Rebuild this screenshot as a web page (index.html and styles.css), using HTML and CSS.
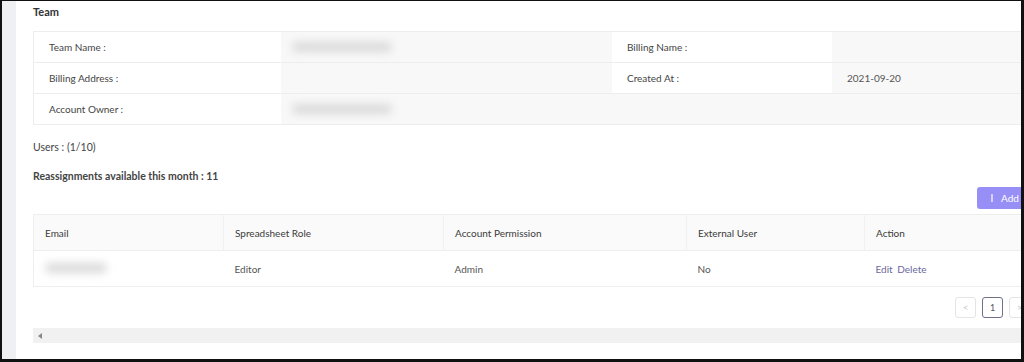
FILE: index.html
```html
<!DOCTYPE html>
<html>
<head>
  <title>Team</title>
  <link rel="stylesheet" href="styles.css">
</head>
<body>
  <div class="frame">
    <aside class="rail"></aside>
    <main class="page">
      <h2 class="title">Team</h2>

      <div class="desc">
        <div class="desc-label">Team Name :</div>
        <div class="desc-value"><span class="redacted"></span></div>
        <div class="desc-label">Billing Name :</div>
        <div class="desc-value"></div>

        <div class="desc-label">Billing Address :</div>
        <div class="desc-value"></div>
        <div class="desc-label">Created At :</div>
        <div class="desc-value">2021-09-20</div>

        <div class="desc-label">Account Owner :</div>
        <div class="desc-value desc-wide"><span class="redacted"></span></div>
      </div>

      <p class="stat">Users : (1/10)</p>
      <p class="stat stat-strong">Reassignments available this month : 11</p>

      <div class="toolbar">
        <button class="btn-add">
          <svg width="6" height="10" viewBox="0 0 6 10"><path d="M3 1v8" stroke="#fff" stroke-width="1.2"/></svg>
          Add
        </button>
      </div>

      <table class="users">
        <thead>
          <tr>
            <th class="col-email">Email</th>
            <th class="col-role">Spreadsheet Role</th>
            <th class="col-perm">Account Permission</th>
            <th class="col-ext">External User</th>
            <th>Action</th>
          </tr>
        </thead>
        <tbody>
          <tr>
            <td><span class="redacted redacted-sm"></span></td>
            <td>Editor</td>
            <td>Admin</td>
            <td>No</td>
            <td><a class="link">Edit</a> <a class="link">Delete</a></td>
          </tr>
        </tbody>
      </table>

      <div class="pager">
        <span class="page-btn page-off">&lt;</span>
        <span class="page-btn page-on">1</span>
        <span class="page-btn page-off">&gt;</span>
      </div>

      <div class="hscroll">
        <svg width="4" height="6" viewBox="0 0 4 6"><path d="M4 0L0 3l4 3z" fill="#888"/></svg>
      </div>
    </main>
  </div>
</body>
</html>
```

FILE: styles.css
```css
body {
  margin: 0;
  font-family: Lato, "Liberation Sans", sans-serif;
  color: #3a3a3a;
}

.frame {
  width: 1024px;
  height: 362px;
  box-sizing: border-box;
  border: 2px solid #111;
  border-top-width: 1px;
  border-right-width: 3px;
  border-bottom-width: 3px;
  display: flex;
  overflow: hidden;
  background-color: #fff;
}

.rail {
  flex: none;
  width: 14px;
  background-color: #eef0f4;
}

.page {
  flex: none;
  width: 1007px;
  padding: 3px 16px 0 17px;
}

.title {
  margin: 0 0 11px;
  font-size: 11px;
  line-height: 16px;
  font-weight: bold;
  color: #333;
}

.desc {
  display: grid;
  grid-template-columns: 247px 331px 220px 1fr;
  border: 1px solid #ededed;
  border-bottom: none;
  font-size: 10px;
}

.desc-label,
.desc-value {
  height: 30px;
  display: flex;
  align-items: center;
  border-bottom: 1px solid #ededed;
}

.desc-label {
  padding-left: 15px;
  background-color: #fff;
  color: #444;
}

.desc-value {
  padding-left: 15px;
  background-color: #f8f8f8;
  color: #555;
}

.desc-wide {
  grid-column: span 3;
}

.redacted {
  display: inline-block;
  width: 100px;
  height: 10px;
  margin-left: -4px;
  border-radius: 6px;
  background-color: #dadada;
  filter: blur(4px);
}

.redacted-sm {
  width: 62px;
  margin-left: 0;
}

.stat {
  margin: 14px 0 0;
  font-size: 10.5px;
  line-height: 16px;
  color: #444;
}

.stat-strong {
  margin-top: 13px;
  font-weight: bold;
}

.toolbar {
  display: flex;
  justify-content: flex-end;
  margin-top: 3px;
}

.btn-add {
  width: 63px;
  height: 22px;
  padding: 0 0 0 12px;
  display: flex;
  align-items: center;
  gap: 6px;
  border: none;
  border-radius: 3px;
  background-color: #978ff5;
  color: #fff;
  font-family: inherit;
  font-size: 10px;
}

.users {
  width: 100%;
  margin-top: 5px;
  border-collapse: collapse;
  border: 1px solid #eeeeee;
  font-size: 10px;
  table-layout: fixed;
}

.users th,
.users td {
  height: 35px;
  padding: 0 0 0 11px;
  text-align: left;
  border-bottom: 1px solid #eeeeee;
}

.users th {
  background-color: #fafafa;
  font-weight: normal;
  color: #3a3a3a;
}

.users th + th {
  border-left: 1px solid #f0f0f0;
}

.users td {
  color: #555;
}

.col-email { width: 178px; }
.col-role { width: 208px; }
.col-perm { width: 231px; }
.col-ext { width: 166px; }

.link {
  color: #6a68a0;
  margin-right: 2px;
}

.pager {
  display: flex;
  justify-content: flex-end;
  gap: 6px;
  margin: 10px 10px 0 0;
}

.page-btn {
  width: 19px;
  height: 19px;
  display: flex;
  align-items: center;
  justify-content: center;
  border: 1px solid #e4e4e4;
  border-radius: 3px;
  font-size: 9px;
  color: #555;
}

.page-off {
  color: #c4c4c4;
}

.page-on {
  border-color: #6d7088;
}

.hscroll {
  height: 15px;
  margin-top: 10px;
  padding-left: 5px;
  display: flex;
  align-items: center;
  background-color: #f1f1f1;
}
```
